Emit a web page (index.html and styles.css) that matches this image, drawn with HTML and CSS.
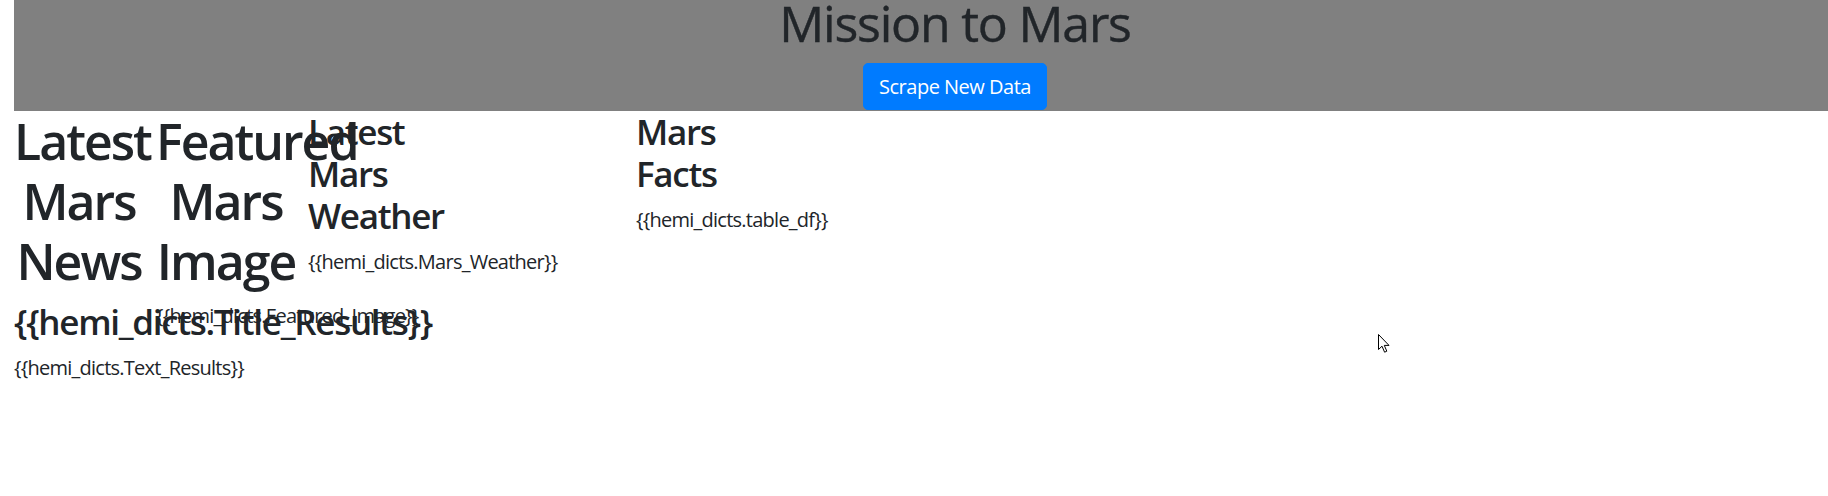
FILE: index.html
```html
<!DOCTYPE html>
<html lang="en">
<head>
<meta charset="utf-8">
<title>Mission to Mars</title>
<link rel="stylesheet" href="styles.css">
</head>
<body>
  <header class="jumbotron">
    <h1 class="site-title">Mission to Mars</h1>
    <button class="btn-primary" type="button">Scrape New Data</button>
  </header>
  <main class="row">
    <section class="col col-news">
      <h1 class="big-heading">Latest Mars News</h1>
      <h3 class="sub-heading">{{hemi_dicts.Title_Results}}</h3>
      <p class="body-text">{{hemi_dicts.Text_Results}}</p>
    </section>
    <section class="col col-image">
      <h1 class="big-heading">Featured Mars Image</h1>
      <p class="body-text">{{hemi_dicts.Featured_Image}}</p>
    </section>
    <section class="col col-weather">
      <h3 class="sub-heading">Latest Mars Weather</h3>
      <p class="body-text">{{hemi_dicts.Mars_Weather}}</p>
    </section>
    <section class="col col-facts">
      <h3 class="sub-heading">Mars Facts</h3>
      <p class="body-text">{{hemi_dicts.table_df}}</p>
    </section>
  </main>
  <svg class="cursor" width="14" height="21" viewBox="0 0 14 21" aria-hidden="true">
    <path d="M1.5 1.5 L1.5 16.5 L5 13.2 L7.6 19.2 L9.8 18.2 L7.3 12.4 L12 12.4 Z" fill="#fff" stroke="#000" stroke-width="1" stroke-linejoin="miter"/>
  </svg>
</body>
</html>
```
FILE: styles.css
```css
html, body {
  margin: 0;
  padding: 0;
  background: #ffffff;
}

body {
  padding-left: 14px;
  font-family: "Open Sans", "Noto Sans", "DejaVu Sans", sans-serif;
  color: #212529;
  font-size: 20px;
  line-height: 1.5;
  position: relative;
  min-height: 496px;
  box-sizing: border-box;
}

.jumbotron {
  background: #808080;
  height: 111px;
  box-sizing: border-box;
  padding-left: 68px;
  text-align: center;
}

.site-title {
  margin: 0 0 17px;
  font-size: 50px;
  font-weight: 500;
  letter-spacing: -1.2px;
  line-height: 46px;
  color: #212529;
  -webkit-text-stroke: 0.4px #212529;
}

.btn-primary {
  display: inline-block;
  height: 47px;
  padding: 0 15px;
  border: 1px solid #007bff;
  border-radius: 5px;
  background: #007bff;
  color: #ffffff;
  font-family: inherit;
  font-size: 20px;
  letter-spacing: -0.5px;
  line-height: 45px;
  font-weight: 400;
  cursor: pointer;
}

.row {
  display: flex;
  align-items: flex-start;
}

.col {
  flex: none;
}

.col-news {
  width: 130px;
  margin-right: 12px;
  text-align: center;
}

.col-image {
  width: 140px;
  margin-right: 12px;
  text-align: center;
}

.col-weather {
  width: 140px;
  margin-right: 188px;
}

.col-facts {
  width: 130px;
}

.big-heading {
  margin: 0 0 10px;
  font-size: 50px;
  font-weight: 600;
  letter-spacing: -2px;
  line-height: 1.2;
}

.sub-heading {
  margin: 0 0 10px;
  font-size: 35px;
  font-weight: 600;
  letter-spacing: -1.3px;
  line-height: 1.2;
  text-align: left;
}

.body-text {
  margin: 0 0 20px;
  font-size: 20px;
  font-weight: 400;
  letter-spacing: -0.75px;
  line-height: 1.5;
  text-align: left;
}

.cursor {
  position: absolute;
  left: 1377px;
  top: 333px;
}
```
